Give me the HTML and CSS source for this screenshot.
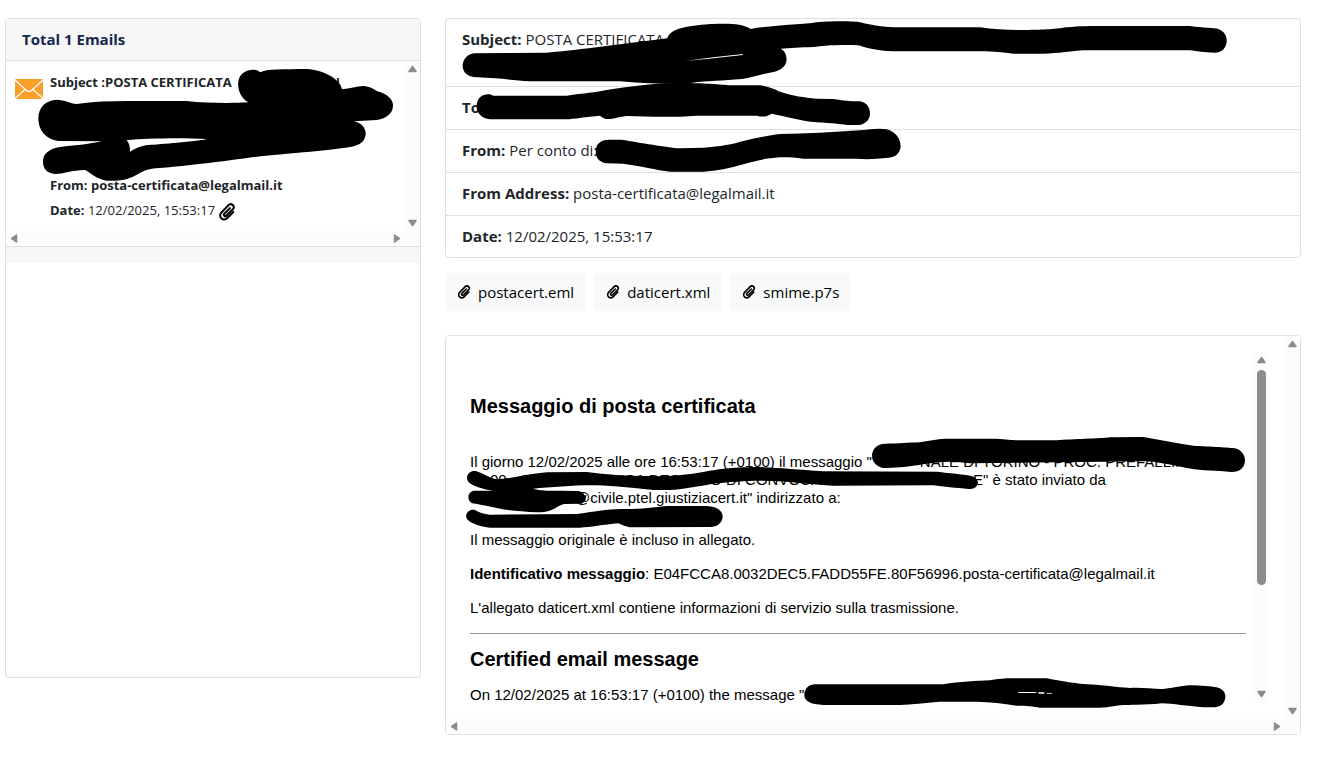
FILE: index.html
```
<!DOCTYPE html>
<html lang="it">
<head>
    <meta charset="UTF-8">
    <meta name="viewport" content="width=device-width, initial-scale=1.0">
    <title>Emails</title>
    <link rel="stylesheet" href="styles.css">
</head>
<body>
    <!-- shared icons -->
    <svg class="symbols" aria-hidden="true">
        <symbol id="clip" viewBox="0 0 16 16">
            <path d="M10.6 4.6 5.6 9.6a1.2 1.2 0 0 0 1.8 1.8l5.8-5.8a2.6 2.6 0 0 0-3.8-3.7L3 8.4a3.6 3.6 0 0 0 5.1 5.2L13.6 8" fill="none" stroke="currentColor" stroke-width="1.8" stroke-linecap="round"/>
        </symbol>
        <symbol id="arrow" viewBox="0 0 15 15">
            <path d="M7.5 5.500 11 10.500H4z" fill="#8b8b8b" stroke="#8b8b8b" stroke-width="1.500" stroke-linejoin="round"/>
        </symbol>
    </svg>

    <main class="mail">
        <section class="email-list">
            <h1 class="list-header">Total 1 Emails</h1>
            <div class="scroll-box">
                <article class="email-item">
                    <svg class="envelope" viewBox="0 0 28 20" aria-hidden="true">
                        <rect width="28" height="20" rx="1" fill="#fa9f28"/>
                        <path d="M0 1 11 11Q14 14 17 11L28 1M0 19.500 10 10.500M28 19.500 18 10.500" fill="none" stroke="#fff" stroke-width="1.300"/>
                    </svg>
                    <div class="email-text">
                        <p class="item-subject"><b>Subject :POSTA CERTIFICATA<i></i>I</b></p>
                        <p><b>From: posta-certificata@legalmail.it</b></p>
                        <p><b>Date:</b> 12/02/2025, 15:53:17 <svg class="clip-large" aria-label="Allegato"><use href="#clip"/></svg></p>
                    </div>
                </article>
                <div class="bar vertical"><svg><use href="#arrow"/></svg><svg class="down"><use href="#arrow"/></svg></div>
                <div class="bar horizontal"><svg class="left"><use href="#arrow"/></svg><svg class="right"><use href="#arrow"/></svg></div>
            </div>
            <div class="list-footer"></div>
            <svg class="marker list-marker" viewBox="18 27 1242 750" aria-hidden="true">
                <path fill-rule="evenodd" d="M715 215C718 180 765 170 780 187C800 176 850 178 920 177C975 180 1022 210 1026 238C1050 236 1070 228 1090 228C1110 229 1122 238 1130 243C1165 252 1180 270 1179 288C1178 315 1150 328 1130 330L1062 334C1085 338 1098 355 1097 373C1095 395 1080 405 1055 410C960 425 800 435 770 440C680 453 520 472 480 474C440 476 430 484 410 494C380 512 350 513 320 512C285 505 275 490 255 480C215 480 190 492 165 492C140 490 128 475 129 452C130 425 160 412 185 410C215 408 270 402 305 394L175 393C135 388 115 360 115 325C115 290 140 270 170 269C195 270 210 280 230 282C280 275 330 273 380 273L560 273C620 280 700 280 745 277C720 262 712 235 715 215ZM390 425C420 405 440 405 460 404C520 400 600 392 622 387C540 382 440 385 380 390C388 400 390 410 390 425Z"/>
            </svg>
        </section>

        <section class="email-detail">
            <div class="info">
                <p class="info-subject"><b>Subject:</b> POSTA CERTIFICATA</p>
                <p><b>To</b></p>
                <p><b>From:</b> Per conto di:</p>
                <p><b>From Address:</b> posta-certificata@legalmail.it</p>
                <p><b>Date:</b> 12/02/2025, 15:53:17</p>
                <svg class="marker info-marker" viewBox="18 27 2562 711" aria-hidden="true">
                    <path d="M682 85C690 55 740 48 810 42C870 40 905 40 932 57C1000 45 1090 44 1130 37C1180 33 1240 33 1260 37C1300 48 1350 52 1370 52L1620 52C1660 58 1700 60 1740 60C1810 60 1840 58 1880 52C1920 48 1950 48 2000 48L2250 48C2290 54 2320 53 2335 57C2355 65 2361 80 2360 95C2358 115 2345 127 2325 128C2290 127 2270 124 2250 121L1930 121C1880 124 1860 130 1810 131L1720 131C1680 126 1640 124 1615 124L1360 124C1310 122 1280 114 1255 106C1210 103 1150 106 1120 111C1080 112 1050 114 1022 116C1038 125 1041 140 1039 155C1036 170 1020 182 1000 186C960 193 930 203 905 207C850 212 800 213 760 218C700 224 620 222 540 214L270 214C230 212 200 207 165 205L100 201C75 197 67 180 68 165C70 145 85 131 105 130L320 128C420 120 560 100 682 85Z"/>
                    <path d="M110 285C112 262 130 250 150 253L160 257L380 257C430 250 470 247 500 240C580 228 640 222 680 220C740 216 840 222 870 226L960 226C990 230 1010 240 1020 245C1060 258 1090 262 1130 266L1180 267C1210 272 1230 274 1260 274C1280 278 1290 292 1290 310C1290 328 1278 342 1258 345L1220 345C1200 342 1180 340 1130 337C1080 332 1030 318 995 311C980 320 970 322 950 317L770 317C700 323 620 320 560 318C530 322 520 327 505 327C490 327 485 320 480 317C440 320 400 327 380 328L150 328C125 325 108 308 110 285Z"/>
                    <path d="M467 425C467 400 485 389 505 389L545 389C600 398 680 412 720 415L790 413C840 410 880 402 910 393C950 384 990 375 1020 372C1100 372 1180 366 1260 361C1300 357 1320 354 1340 358C1365 364 1382 385 1382 410C1380 430 1365 442 1345 443C1310 447 1280 449 1250 446L1090 446C1060 442 1040 441 1020 442C970 445 940 455 910 463C870 475 830 483 790 485L690 485C650 480 600 468 550 461L500 460C480 457 467 445 467 425Z"/>
                    <path class="gap" d="M735 153 820 142 909 132 908 135 800 147z"/>
                </svg>
            </div>

            <div class="attachments">
                <button type="button"><svg><use href="#clip"/></svg>postacert.eml</button>
                <button type="button"><svg><use href="#clip"/></svg>daticert.xml</button>
                <button type="button"><svg><use href="#clip"/></svg>smime.p7s</button>
            </div>

            <div class="message scroll-box">
                <div class="message-pane">
                    <div class="message-body">
                        <h2>Messaggio di posta certificata</h2>
                        <p class="lines">
                            <span>Il giorno 12/02/2025 alle ore 16:53:17 (+0100) il messaggio "<i></i>NALE DI TORINO - PROC. PREFALLIM</span>
                            <span><i class="half"></i>00 - 1<i class="wide"></i>ICA DECRETO DI CONVOCA<i class="wider"></i>E" è stato inviato da</span>
                            <span><i class="address"></i>@civile.ptel.giustiziacert.it" indirizzato a:</span>
                        </p>
                        <p>Il messaggio originale è incluso in allegato.</p>
                        <p><b>Identificativo messaggio</b>: E04FCCA8.0032DEC5.FADD55FE.80F56996.posta-certificata@legalmail.it</p>
                        <p>L'allegato daticert.xml contiene informazioni di servizio sulla trasmissione.</p>
                        <hr>
                        <h2>Certified email message</h2>
                        <p>On 12/02/2025 at 16:53:17 (+0100) the message "</p>
                    </div>
                    <div class="bar vertical"><svg><use href="#arrow"/></svg><span class="thumb"></span><svg class="down"><use href="#arrow"/></svg></div>
                </div>
                <div class="bar vertical"><svg><use href="#arrow"/></svg><svg class="down"><use href="#arrow"/></svg></div>
                <div class="bar horizontal"><svg class="left"><use href="#arrow"/></svg><svg class="right"><use href="#arrow"/></svg></div>
                <svg class="marker message-marker" viewBox="18 -282 2562 1194" aria-hidden="true">
                    <path d="M1296 75C1298 52 1315 42 1335 41C1380 41 1400 38 1440 37C1480 30 1500 26 1520 26L1670 26C1710 30 1730 31 1760 31L1850 31C1900 27 1980 26 2010 22L2110 21C2160 30 2210 40 2260 47C2310 50 2370 52 2385 55C2405 60 2415 75 2415 92C2414 112 2400 126 2375 126L2340 123C2300 122 2250 118 2230 112C2190 104 2150 96 2120 94L1590 100C1540 92 1500 94 1450 103C1400 112 1360 114 1330 114C1310 110 1295 95 1296 75Z"/>
                    <path d="M81 143C82 128 95 121 107 123C125 128 145 142 170 148C210 146 260 133 320 127L440 126C500 135 560 137 620 138C680 140 740 136 790 126C830 118 870 112 950 111C1010 112 1070 118 1150 124L1490 125C1530 130 1590 134 1600 140C1615 148 1617 160 1610 168C1605 176 1595 177 1585 177C1550 174 1510 170 1480 166L1180 167C1120 164 1080 158 1040 155C960 148 880 155 830 160C780 168 720 180 690 180L640 180C560 172 500 166 450 166C400 166 330 172 280 176C290 180 320 183 360 182L415 183C440 187 442 215 425 221L372 222C345 230 340 248 290 247C240 244 190 240 160 232C130 225 110 222 95 219C80 210 82 185 103 182L158 182C125 176 80 165 81 143Z"/>
                    <path d="M78 258C80 243 93 236 105 240C115 246 130 253 150 254L410 252C460 245 500 238 545 237C600 238 640 232 680 228L800 228C835 230 848 245 848 260C846 280 832 290 810 291L570 292C555 290 545 284 535 280C490 284 450 292 420 293L150 293C110 288 78 275 78 258Z"/>
                    <path d="M1093 795C1093 775 1108 763 1125 763L1510 763C1560 755 1610 753 1650 751C1690 745 1700 745 1720 745L1820 745C1870 755 1920 762 1940 763C1990 765 2030 772 2070 774C2110 772 2140 778 2170 777C2210 772 2230 766 2260 766C2300 768 2320 770 2335 773C2352 780 2357 790 2356 802C2354 820 2345 830 2325 832L2290 832C2240 828 2200 821 2165 820C2110 826 2070 824 2040 826C2010 830 2000 833 1980 833L1800 833C1780 829 1760 827 1730 827C1690 820 1650 816 1610 815L1500 815C1450 820 1420 822 1380 825L1150 825C1110 822 1094 815 1093 795Z"/>
                    <path class="gap" d="M1735 786h54v3h-54zM1795 787h18v4h-18zM1820 789h16v2h-16z"/>
                </svg>
            </div>
        </section>
    </main>
</body>
</html>
```

FILE: styles.css
```
* {
    box-sizing: border-box;
}
body {
    margin: 0;
    background-color: #fff;
    color: #212529;
    font-family: "Open Sans", "Noto Sans", sans-serif;
    font-size: 15px;
}
h1, h2, p {
    margin: 0;
}
.symbols {
    display: none;
}
.mail {
    display: grid;
    grid-template-columns: 52fr 107fr;
    gap: 24px;
    align-items: start;
    padding: 18px 26px 20px 5px;
}
.email-list, .info, .message {
    position: relative;
    border: 1px solid #dfdfdf;
    border-radius: 4px;
}

/* email list */
.email-list {
    min-height: 660px;
}
.list-header {
    padding: 8px 16px;
    border-bottom: 1px solid #dfdfdf;
    background-color: #f7f7f7;
    color: #12284c;
    font-size: 15px;
    line-height: 25px;
}
.scroll-box {
    display: grid;
    grid-template-columns: 1fr 15px;
    grid-template-rows: 1fr 15px;
}
.email-item {
    display: flex;
    gap: 6px;
    min-height: 170px;
    padding: 9px 8px 8px;
    font-size: 13px;
    line-height: 25px;
}
.envelope {
    flex: none;
    width: 30px;
    height: 20px;
    margin-top: 9px;
}
.item-subject {
    min-height: 103px;
    line-height: 24px;
}
.item-subject i {
    display: inline-block;
    width: 104px;
}
.clip-large {
    width: 18px;
    height: 18px;
    color: #000;
    vertical-align: middle;
}
.list-footer {
    height: 17px;
    border-top: 1px solid #dfdfdf;
    background-color: #f7f7f7;
}

/* scroll bars */
.bar {
    display: flex;
    justify-content: space-between;
    background-color: #fcfcfc;
}
.bar svg {
    width: 15px;
    height: 15px;
}
.vertical {
    flex-direction: column;
}
.horizontal {
    grid-column: 1 / -1;
    padding-right: 15px;
}
.down {
    transform: rotate(180deg);
}
.left {
    transform: rotate(-90deg);
}
.right {
    transform: rotate(90deg);
}
.thumb {
    width: 9px;
    height: 215px;
    margin: 3px auto auto;
    border-radius: 5px;
    background-color: #8b8b8b;
}

/* email details */
.info p {
    padding: 8px 16px 9px;
    border-bottom: 1px solid #dfdfdf;
    line-height: 25px;
}
.info p:last-of-type {
    padding-bottom: 8px;
    border-bottom: none;
}
.info .info-subject {
    min-height: 68px;
}
.attachments {
    display: flex;
    gap: 8px;
    margin: 15px 0 24px;
}
.attachments button {
    display: flex;
    align-items: center;
    gap: 7px;
    height: 38px;
    padding: 0 12px;
    border: none;
    border-radius: 4px;
    background-color: #f8f9fa;
    color: #000;
    font: inherit;
    cursor: pointer;
}
.attachments svg {
    width: 14px;
    height: 14px;
}

/* message */
.message {
    height: 400px;
}
.message-pane {
    display: grid;
    grid-template-columns: 1fr 15px;
    height: 350px;
    margin: 16px 16px 16px 24px;
}
.message-body {
    height: 350px;
    padding: 43px 8px 0 0;
    color: #000;
    font-family: "Liberation Sans", Arial, sans-serif;
    font-size: 15px;
    line-height: 18px;
}
.message-body h2 {
    font-size: 20px;
    line-height: 22px;
}
.message-body p {
    margin-bottom: 16px;
}
.message-body .lines {
    min-height: 72px;
    margin: 36px 0 6px;
}
.lines span {
    display: block;
    white-space: nowrap;
}
.lines i {
    display: inline-block;
    width: 48px;
}
.lines .half {
    width: 20px;
}
.lines .wide {
    width: 92px;
}
.lines .wider {
    width: 152px;
}
.lines .address {
    width: 105px;
}
.message-body hr {
    margin: 0 0 14px;
    border: none;
    border-top: 1px solid #999;
}
.message-body hr + h2 {
    margin-bottom: 16px;
}

/* marker strokes over the text */
.marker {
    position: absolute;
    top: 0;
    left: 0;
    pointer-events: none;
}
.list-marker {
    width: 414px;
    height: 250px;
}
.info-marker {
    width: 854px;
    height: 237px;
}
.message-marker {
    width: 854px;
    height: 398px;
}
.gap {
    fill: #fff;
}
```
